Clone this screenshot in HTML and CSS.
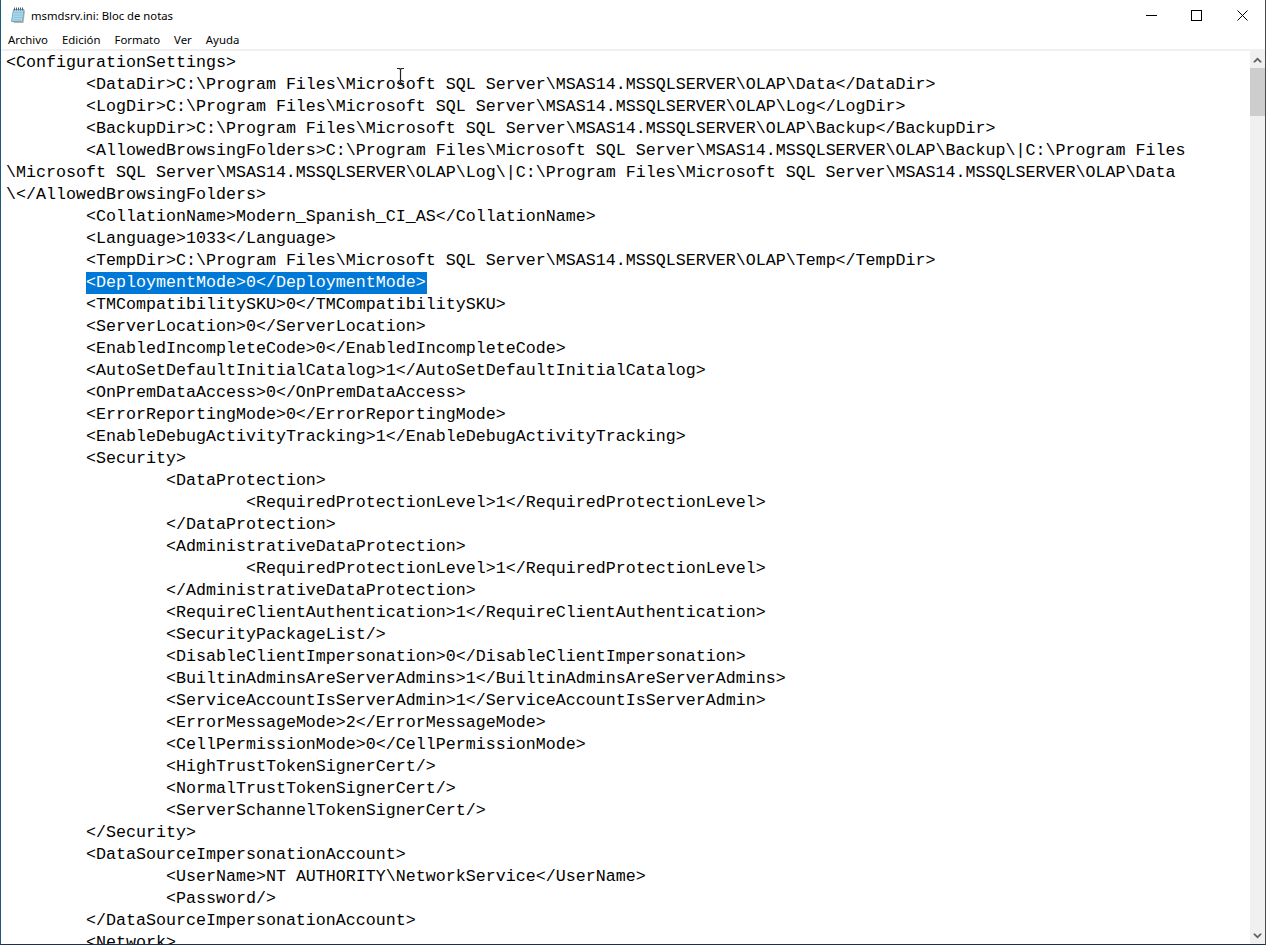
FILE: index.html
```html
<!DOCTYPE html>
<html lang="es">
<head>
<meta charset="utf-8">
<title>msmdsrv.ini: Bloc de notas</title>
<link rel="stylesheet" href="styles.css">
</head>
<body>
<div class="window">
  <header class="titlebar">
    <svg class="app-icon" width="16" height="17" viewBox="0 0 16 17"><path d="M5 4h10l-1.5 12H3.5z" fill="#c8b48a"/><path d="M3.5 2.5h10.5L12.5 14.5H1.5z" fill="#a9d8ec" stroke="#6fa9c6"/><path d="M4.4 5.5h8M4.1 8h8M3.8 10.5h8M3.5 13h7.5" stroke="#8fc0d8"/><path d="M4.5 0.5v3M6.5 0.5v3M8.5 0.5v3M10.5 0.5v3M12.5 0.5v3" stroke="#4d5f6b"/></svg>
    <span class="title">msmdsrv.ini: Bloc de notas</span>
    <div class="controls">
      <div class="ctl"><svg width="11" height="11" viewBox="0 0 11 11"><path d="M0 5.5h11" stroke="#000"/></svg></div>
      <div class="ctl"><svg width="11" height="11" viewBox="0 0 11 11"><rect x=".5" y=".5" width="10" height="10" fill="none" stroke="#000"/></svg></div>
      <div class="ctl"><svg width="11" height="11" viewBox="0 0 11 11"><path d="M.5 .5l10 10M10.5 .5l-10 10" stroke="#000"/></svg></div>
    </div>
  </header>
  <nav class="menubar"><span>Archivo</span><span>Edición</span><span>Formato</span><span>Ver</span><span>Ayuda</span></nav>
  <main class="editor">
<pre class="text">&lt;ConfigurationSettings&gt;
	&lt;DataDir&gt;C:\Program Files\Microsoft SQL Server\MSAS14.MSSQLSERVER\OLAP\Data&lt;/DataDir&gt;
	&lt;LogDir&gt;C:\Program Files\Microsoft SQL Server\MSAS14.MSSQLSERVER\OLAP\Log&lt;/LogDir&gt;
	&lt;BackupDir&gt;C:\Program Files\Microsoft SQL Server\MSAS14.MSSQLSERVER\OLAP\Backup&lt;/BackupDir&gt;
	&lt;AllowedBrowsingFolders&gt;C:\Program Files\Microsoft SQL Server\MSAS14.MSSQLSERVER\OLAP\Backup\|C:\Program Files
\Microsoft SQL Server\MSAS14.MSSQLSERVER\OLAP\Log\|C:\Program Files\Microsoft SQL Server\MSAS14.MSSQLSERVER\OLAP\Data
\&lt;/AllowedBrowsingFolders&gt;
	&lt;CollationName&gt;Modern_Spanish_CI_AS&lt;/CollationName&gt;
	&lt;Language&gt;1033&lt;/Language&gt;
	&lt;TempDir&gt;C:\Program Files\Microsoft SQL Server\MSAS14.MSSQLSERVER\OLAP\Temp&lt;/TempDir&gt;
	<span class="sel">&lt;DeploymentMode&gt;0&lt;/DeploymentMode&gt;</span>
	&lt;TMCompatibilitySKU&gt;0&lt;/TMCompatibilitySKU&gt;
	&lt;ServerLocation&gt;0&lt;/ServerLocation&gt;
	&lt;EnabledIncompleteCode&gt;0&lt;/EnabledIncompleteCode&gt;
	&lt;AutoSetDefaultInitialCatalog&gt;1&lt;/AutoSetDefaultInitialCatalog&gt;
	&lt;OnPremDataAccess&gt;0&lt;/OnPremDataAccess&gt;
	&lt;ErrorReportingMode&gt;0&lt;/ErrorReportingMode&gt;
	&lt;EnableDebugActivityTracking&gt;1&lt;/EnableDebugActivityTracking&gt;
	&lt;Security&gt;
		&lt;DataProtection&gt;
			&lt;RequiredProtectionLevel&gt;1&lt;/RequiredProtectionLevel&gt;
		&lt;/DataProtection&gt;
		&lt;AdministrativeDataProtection&gt;
			&lt;RequiredProtectionLevel&gt;1&lt;/RequiredProtectionLevel&gt;
		&lt;/AdministrativeDataProtection&gt;
		&lt;RequireClientAuthentication&gt;1&lt;/RequireClientAuthentication&gt;
		&lt;SecurityPackageList/&gt;
		&lt;DisableClientImpersonation&gt;0&lt;/DisableClientImpersonation&gt;
		&lt;BuiltinAdminsAreServerAdmins&gt;1&lt;/BuiltinAdminsAreServerAdmins&gt;
		&lt;ServiceAccountIsServerAdmin&gt;1&lt;/ServiceAccountIsServerAdmin&gt;
		&lt;ErrorMessageMode&gt;2&lt;/ErrorMessageMode&gt;
		&lt;CellPermissionMode&gt;0&lt;/CellPermissionMode&gt;
		&lt;HighTrustTokenSignerCert/&gt;
		&lt;NormalTrustTokenSignerCert/&gt;
		&lt;ServerSchannelTokenSignerCert/&gt;
	&lt;/Security&gt;
	&lt;DataSourceImpersonationAccount&gt;
		&lt;UserName&gt;NT AUTHORITY\NetworkService&lt;/UserName&gt;
		&lt;Password/&gt;
	&lt;/DataSourceImpersonationAccount&gt;
	&lt;Network&gt;</pre>
    <div class="scrollbar">
      <div class="arrow"><svg width="9" height="6" viewBox="0 0 9 6"><path d="M4.5 0.5L8.5 4.5V5.5H7L4.5 3L2 5.5H0.5V4.5z" fill="#606060"/></svg></div>
      <div class="track"><div class="thumb"></div></div>
      <div class="arrow"><svg width="9" height="6" viewBox="0 0 9 6"><path d="M4.5 5.5L8.5 1.5V0.5H7L4.5 3L2 0.5H0.5V1.5z" fill="#606060"/></svg></div>
    </div>
    <svg class="cursor" width="7" height="16" viewBox="0 0 7 16"><path d="M0 .5h2.5l1 1 1-1H7M3.5 1.5v13M0 15.5h2.5l1-1 1 1H7" fill="none" stroke="#222" stroke-width="1.2"/></svg>
  </main>
</div>
</body>
</html>
```

FILE: styles.css
```css
* { box-sizing: border-box; }
html, body { margin: 0; height: 100%; overflow: hidden; background: #fff; }
.window {
  width: 1266px;
  height: 945px;
  display: flex;
  flex-direction: column;
  background: #fff;
  border-style: solid;
  border-width: 0 1px 1px 1px;
  border-color: #4a4a4a #4a4a4a #1b2f55 #1b5a78;
  overflow: hidden;
}
.titlebar {
  height: 30px;
  flex: none;
  display: flex;
  align-items: center;
  padding-left: 9px;
  font-family: "Noto Sans", "Open Sans", sans-serif;
  color: #000;
}
.app-icon { margin-right: 5px; }
.title { font-size: 11.3px; }
.controls { margin-left: auto; display: flex; }
.ctl { width: 45px; height: 30px; padding-left: 17px; display: flex; align-items: center; }
.ctl:nth-child(2) { width: 46px; }
.menubar {
  height: 21px;
  flex: none;
  display: flex;
  gap: 14px;
  padding: 1px 0 0 7px;
  border-bottom: 2px solid #f0f0f0;
  font: 11.4px/18px "Noto Sans", "Open Sans", sans-serif;
  color: #000;
}
.editor { flex: 1; min-height: 0; display: flex; position: relative; }
.text {
  flex: 1;
  margin: 0;
  padding: 1px 0 0 5px;
  overflow: hidden;
  font-family: "Liberation Mono", "DejaVu Sans Mono", monospace;
  font-size: 16.667px;
  line-height: 22px;
  tab-size: 8;
  color: #000;
  white-space: pre;
}
.sel { background: #0078d7; color: #fff; display: inline-block; padding-right: 1px; }
.scrollbar { width: 15px; flex: none; display: flex; flex-direction: column; background: #f0f0f0; }
.arrow { height: 17px; flex: none; display: flex; align-items: center; justify-content: center; }
.track { flex: 1; }
.thumb { height: 48px; background: #cdcdcd; }
.cursor { position: absolute; left: 396px; top: 17px; }
```
